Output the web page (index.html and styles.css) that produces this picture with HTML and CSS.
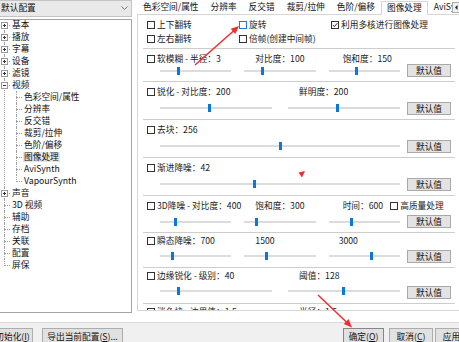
FILE: index.html
```html
<!DOCTYPE html>
<html lang="zh-CN">
<head>
<meta charset="utf-8">
<title>图像处理</title>
<link rel="stylesheet" href="styles.css">
</head>
<body>
<div class="dialog">
  <div class="main">
    <div class="side">
      <div class="combo"><span>默认配置</span><svg class="chev" width="7" height="4" viewBox="0 0 7 4"><path d="M0.5 0.5 L3.5 3.5 L6.5 0.5" fill="none" stroke="#777" stroke-width="1"/></svg></div>
      <div class="treebox">
        <ul class="tree">
          <li><span class="exp"></span>基本</li>
          <li><span class="exp"></span>播放</li>
          <li><span class="exp"></span>字幕</li>
          <li><span class="exp"></span>设备</li>
          <li><span class="exp"></span>滤镜</li>
          <li><span class="exp open"></span>视频
            <ul>
              <li>色彩空间/属性</li>
              <li>分辨率</li>
              <li>反交错</li>
              <li>裁剪/拉伸</li>
              <li>色阶/偏移</li>
              <li class="selrow"><span class="sel">图像处理</span></li>
              <li>AviSynth</li>
              <li>VapourSynth</li>
            </ul>
          </li>
          <li><span class="exp"></span>声音</li>
          <li>3D 视频</li>
          <li>辅助</li>
          <li>存档</li>
          <li>关联</li>
          <li>配置</li>
          <li>屏保</li>
        </ul>
      </div>
    </div>

    <div class="content">
      <div class="tabs">
        <span class="tab">色彩空间/属性</span>
        <span class="tab">分辨率</span>
        <span class="tab">反交错</span>
        <span class="tab">裁剪/拉伸</span>
        <span class="tab">色阶/偏移</span>
        <span class="tab active">图像处理</span>
        <span class="tab">AviSynth</span>
        <span class="tab-scroll"><svg width="7" height="9" viewBox="0 0 7 9"><path d="M4.5 2 L2 4.5 L4.5 7 Z" fill="#222"/></svg></span>
      </div>

      <div class="panel">
        <div class="opts">
          <label class="chk"><span class="cb"></span>上下翻转</label>
          <label class="chk"><span class="cb cb-hover"></span>旋转</label>
          <label class="chk"><span class="cb"><svg width="6" height="6" viewBox="0 0 6 6"><path d="M0.8 3 L2.4 4.6 L5.3 1.2" fill="none" stroke="#222" stroke-width="1"/></svg></span>利用多核进行图像处理</label>
          <label class="chk"><span class="cb"></span>左右翻转</label>
          <label class="chk"><span class="cb"></span>倍帧(创建中间帧)</label>
        </div>

        <div class="group group-first">
          <div class="gmain">
            <div class="glabels cols3">
              <label class="chk lead"><span class="cb"></span>软模糊 - 半径：3</label>
              <span class="glbl">对比度：100</span>
              <span class="glbl c3">饱和度：150</span>
            </div>
            <div class="gsliders cols3">
              <div class="slider"><i style="left:25%"></i></div>
              <div class="slider"><i style="left:25%"></i></div>
              <div class="slider"><i style="left:39%"></i></div>
            </div>
          </div>
          <button class="gbtn">默认值</button>
        </div>

        <div class="group">
          <div class="gmain">
            <div class="glabels cols2">
              <label class="chk lead"><span class="cb"></span>锐化 - 对比度：200</label>
              <span class="glbl">鲜明度：200</span>
            </div>
            <div class="gsliders cols2">
              <div class="slider"><i style="left:44%"></i></div>
              <div class="slider"><i style="left:44%"></i></div>
            </div>
          </div>
          <button class="gbtn">默认值</button>
        </div>

        <div class="group">
          <div class="gmain">
            <div class="glabels cols1">
              <label class="chk lead"><span class="cb"></span>去块：256</label>
            </div>
            <div class="gsliders cols1">
              <div class="slider"><i style="left:50%"></i></div>
            </div>
          </div>
          <button class="gbtn">默认值</button>
        </div>

        <div class="group">
          <div class="gmain">
            <div class="glabels cols1">
              <label class="chk lead"><span class="cb"></span>渐进降噪：42</label>
            </div>
            <div class="gsliders cols1">
              <div class="slider"><i style="left:39%"></i></div>
            </div>
          </div>
          <button class="gbtn">默认值</button>
        </div>

        <div class="group group-37">
          <div class="gmain">
            <div class="glabels cols3">
              <label class="chk lead"><span class="cb"></span>3D降噪 - 对比度：400</label>
              <span class="glbl">饱和度：300</span>
              <span class="glbl c3">时间：600<label class="chk hq"><span class="cb"></span>高质量处理</label></span>
            </div>
            <div class="gsliders cols3">
              <div class="slider"><i style="left:21%"></i></div>
              <div class="slider"><i style="left:17%"></i></div>
              <div class="slider"><i style="left:31%"></i></div>
            </div>
          </div>
          <button class="gbtn">默认值</button>
        </div>

        <div class="group group-tight">
          <div class="gmain">
            <div class="glabels cols3">
              <label class="chk lead"><span class="cb"></span>瞬态降噪：700</label>
              <span class="glbl">1500</span>
              <span class="glbl c3b">3000</span>
            </div>
            <div class="gsliders cols3">
              <div class="slider"><i style="left:17%"></i></div>
              <div class="slider"><i style="left:31%"></i></div>
              <div class="slider"><i style="left:59%"></i></div>
            </div>
          </div>
          <button class="gbtn">默认值</button>
        </div>

        <div class="group group-tight group-36">
          <div class="gmain">
            <div class="glabels cols2">
              <label class="chk lead"><span class="cb"></span>边缘锐化 - 级别：40</label>
              <span class="glbl">阈值：128</span>
            </div>
            <div class="gsliders cols2">
              <div class="slider"><i style="left:16%"></i></div>
              <div class="slider"><i style="left:49%"></i></div>
            </div>
          </div>
          <button class="gbtn">默认值</button>
        </div>

        <div class="group group-tight">
          <div class="gmain">
            <div class="glabels cols2">
              <label class="chk lead"><span class="cb"></span>消色块 - 边界值：1.5</label>
              <span class="glbl">半径：1.5</span>
            </div>
          </div>
        </div>
      </div>
    </div>
  </div>

  <div class="footer">
    <button class="fbtn fbtn-init">初始化(<u>I</u>)</button>
    <button class="fbtn fbtn-export">导出当前配置(<u>S</u>)...</button>
    <button class="fbtn fbtn-ok">确定(<u>O</u>)</button>
    <button class="fbtn fbtn-cancel">取消(<u>C</u>)</button>
    <button class="fbtn fbtn-apply">应用(<u>A</u>)</button>
  </div>

  <svg class="annot" width="459" height="342" viewBox="0 0 459 342">
    <line x1="195" y1="65" x2="234" y2="30.5" stroke="#ec2f2f" stroke-width="1.5"/>
    <polygon points="239,26 235.3,33.9 230.7,28.7" fill="#ec2f2f"/>
    <line x1="318" y1="295" x2="348" y2="323.5" stroke="#ec2f2f" stroke-width="1.5"/>
    <polygon points="352,327.5 343.8,324 348.6,319" fill="#ec2f2f"/>
    <polygon points="298.5,172.5 305,171 302,177.5" fill="#ec2f2f"/>
  </svg>
</div>
</body>
</html>
```

FILE: styles.css
```css
* {
  box-sizing: border-box;
}

html, body {
  margin: 0;
  padding: 0;
}

body {
  width: 459px;
  height: 342px;
  overflow: hidden;
  background: #fff;
  font-family: "Noto Sans CJK SC", "Noto Sans", sans-serif;
  font-size: 8.7px;
  color: #1a1a1a;
}

.dialog {
  position: relative;
  width: 459px;
  height: 342px;
  display: flex;
  flex-direction: column;
}

.main {
  height: 322px;
  flex-shrink: 0;
  display: flex;
}

/* ---------- left side ---------- */
.side {
  width: 136px;
  margin-left: -4px;
  flex-shrink: 0;
  display: flex;
  flex-direction: column;
  gap: 2px;
}

.combo {
  height: 17px;
  background: #e9e9e9;
  border: 1px solid #c4c4c4;
  display: flex;
  align-items: center;
  justify-content: space-between;
  padding: 0 3px 2px 4px;
  line-height: 12px;
  color: #111;
}

.chev {
  display: block;
}

.treebox {
  height: 294px;
  border: 1px solid #a3a3a3;
  background: #fff;
  overflow: hidden;
}

.tree,
.tree ul {
  list-style: none;
  margin: 0;
  padding: 0;
}

.tree {
  padding-left: 3px;
  margin-top: -1px;
  color: #111;
}

.tree li {
  position: relative;
  padding-left: 12px;
  height: auto;
  line-height: 12px;
  white-space: nowrap;
}

.tree li::before {
  content: "";
  position: absolute;
  left: 4px;
  top: 6px;
  width: 6px;
  border-top: 1px dotted #a0a0a0;
}

.tree li::after {
  content: "";
  position: absolute;
  left: 4px;
  top: 0;
  bottom: 0;
  border-left: 1px dotted #a0a0a0;
}

.tree > li:first-child::after {
  top: 6px;
}

.tree li:last-child::after {
  bottom: auto;
  height: 7px;
}

.exp {
  position: absolute;
  left: 1px;
  top: 3px;
  width: 7px;
  height: 7px;
  border: 1px solid #9a9a9a;
  background-color: #fff;
  background-image: linear-gradient(#333, #333), linear-gradient(#333, #333);
  background-size: 3px 1px, 1px 3px;
  background-position: center, center;
  background-repeat: no-repeat;
  z-index: 1;
}

.exp.open {
  background-image: linear-gradient(#333, #333);
  background-size: 3px 1px;
}

.selrow {
  height: 12px;
}

.sel {
  display: inline-block;
  height: 10px;
  margin-top: 1px;
  line-height: 10px;
  vertical-align: top;
  background: #e5e5e5;
  padding: 0 1px;
  margin-left: -1px;
}

/* ---------- right side ---------- */
.content {
  margin-left: 5px;
  flex: 1;
  min-width: 0;
  display: flex;
  flex-direction: column;
}

.tabs {
  position: relative;
  height: 14px;
  display: flex;
  align-items: flex-end;
  white-space: nowrap;
  color: #111;
}

.tab {
  height: 13px;
  line-height: 11px;
  padding: 0 6px;
  flex-shrink: 0;
}

.tab.active {
  position: relative;
  z-index: 1;
  height: 14px;
  margin-bottom: -1px;
  background: #fff;
  border: 1px solid #d6d6d6;
  border-bottom: none;
  padding: 0 5px;
  line-height: 11px;
}

.tab-scroll {
  position: absolute;
  left: 315px;
  top: 2px;
  width: 9px;
  height: 11px;
  background: #f0f0f0;
  border: 1px solid #adadad;
  z-index: 2;
  display: flex;
  align-items: center;
  justify-content: center;
}

.panel {
  width: 330px;
  height: 297px;
  flex-shrink: 0;
  border: 1px solid #d6d6d6;
  background: #fff;
  overflow: hidden;
}

.opts {
  margin-left: 5px;
  width: 312px;
  display: grid;
  grid-template-columns: 92px 92px 1fr;
  grid-auto-rows: 14px;
  padding: 3px 0 2px 4px;
  border-bottom: 1px solid #cdcdcd;
}

.chk {
  display: inline-flex;
  align-items: center;
  white-space: nowrap;
  line-height: 12px;
}

.cb {
  display: inline-flex;
  align-items: center;
  justify-content: center;
  width: 8px;
  height: 8px;
  flex-shrink: 0;
  border: 1px solid #333;
  background: #fff;
  margin-right: 2px;
}

.cb svg {
  display: block;
}

.cb-hover {
  border-color: #1f7ad9;
}

.group {
  margin-left: 5px;
  width: 312px;
  height: 38px;
  display: flex;
  padding: 4px 4px 0 17px;
  border-bottom: 1px solid #cdcdcd;
}

.group-first {
  height: 33px;
}

.group-37 {
  height: 37px;
}

.group-tight {
  height: 35px;
  padding-top: 2px;
}

.group-36 {
  height: 36px;
}

.gmain {
  width: 240px;
  margin-right: 7px;
  flex-shrink: 0;
}

.cols1,
.cols2,
.cols3 {
  display: grid;
}

.cols1 {
  grid-template-columns: minmax(0, 1fr);
}

.cols2 {
  grid-template-columns: repeat(2, minmax(0, 1fr));
  column-gap: 16px;
}

.cols3 {
  grid-template-columns: repeat(3, minmax(0, 1fr));
  column-gap: 13px;
}

.glabels {
  height: 12px;
  line-height: 12px;
  white-space: nowrap;
}

.lead {
  margin-left: -13px;
}

.glbl {
  padding-left: 11px;
  display: flex;
  align-items: center;
}

.glbl.c3 {
  padding-left: 14px;
}

.glbl.c3b {
  padding-left: 10px;
}

.hq {
  margin-left: 7px;
}

.gsliders {
  margin-top: 6px;
  height: 8px;
}

.group-first .gsliders {
  margin-top: 2px;
}

.group-tight .gsliders {
  margin-top: 5px;
}

.slider {
  position: relative;
  height: 8px;
  background: linear-gradient(#dcdcdc, #dcdcdc) 0 3px / 100% 2px no-repeat;
}

.slider i {
  position: absolute;
  top: 0;
  width: 3px;
  height: 8px;
  margin-left: -1px;
  background: #0a78d7;
}

.gbtn {
  align-self: flex-end;
  margin-bottom: 4px;
  width: 44px;
  height: 13px;
  flex-shrink: 0;
  padding: 0;
  font: inherit;
  line-height: 11px;
  color: #111;
  background: #e3e3e3;
  border: 1px solid #a9a9a9;
  border-radius: 0;
}

/* ---------- footer ---------- */
.footer {
  height: 20px;
  flex-shrink: 0;
  display: flex;
  align-items: flex-start;
  padding-top: 5px;
  background: #f0f0f0;
  border-top: 1px solid #dcdcdc;
}

.fbtn {
  height: 17px;
  flex-shrink: 0;
  padding: 0;
  font: inherit;
  line-height: 15px;
  color: #111;
  background: #e1e1e1;
  border: 1px solid #adadad;
  border-radius: 0;
  white-space: nowrap;
}

.fbtn-init {
  margin-left: -8px;
  width: 41px;
}

.fbtn-export {
  margin-left: 9px;
  width: 81px;
}

.fbtn-ok {
  margin-left: 220px;
  width: 41px;
  border-color: #858585;
}

.fbtn-cancel {
  margin-left: 5px;
  width: 44px;
}

.fbtn-apply {
  margin-left: 2px;
  width: 44px;
}

.annot {
  position: absolute;
  left: 0;
  top: 0;
  pointer-events: none;
}
```
